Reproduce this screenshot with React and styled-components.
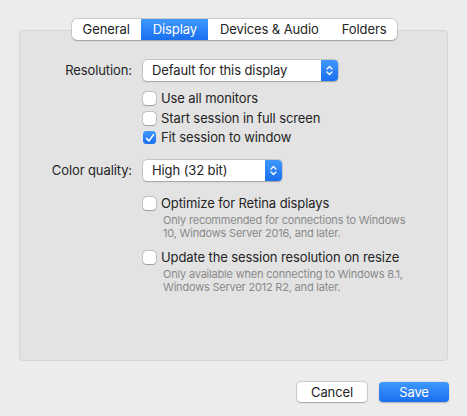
import React from 'react';
import styled, { createGlobalStyle } from 'styled-components';

const GlobalStyle = createGlobalStyle`
  html, body {
    margin: 0;
    padding: 0;
    background: #ececec;
  }
  body {
    font-family: Inter, "Noto Sans", "Liberation Sans", sans-serif;
    font-size: 13px;
    letter-spacing: -0.1px;
    color: #242424;
    -webkit-font-smoothing: antialiased;
  }
`;

const tabs = ['General', 'Display', 'Devices & Audio', 'Folders'];

function Chevrons() {
  return (
    <svg width="7" height="11" viewBox="0 0 7 11" fill="none">
      <path d="M1 4 L3.5 1.5 L6 4" stroke="#fff" strokeWidth="1.3" strokeLinecap="round" strokeLinejoin="round" />
      <path d="M1 7 L3.5 9.5 L6 7" stroke="#fff" strokeWidth="1.3" strokeLinecap="round" strokeLinejoin="round" />
    </svg>
  );
}

function Check() {
  return (
    <svg width="10" height="10" viewBox="0 0 10 10" fill="none">
      <path d="M1.6 5.4 L4 7.9 L8.6 1.6" stroke="#fff" strokeWidth="1.6" strokeLinecap="round" strokeLinejoin="round" />
    </svg>
  );
}

function Popup({ value, width }) {
  return (
    <St.Popup $width={width}>
      <span className="value">{value}</span>
      <span className="arrows">
        <Chevrons />
      </span>
    </St.Popup>
  );
}

function Checkbox({ label, checked, note }) {
  return (
    <St.CheckRow>
      <St.Box $checked={checked}>{checked && <Check />}</St.Box>
      <St.CheckText>
        <span>{label}</span>
        {note && <St.Note>{note}</St.Note>}
      </St.CheckText>
    </St.CheckRow>
  );
}

export default function App() {
  return (
    <St.Window>
      <GlobalStyle />
      <St.TabBar>
        {tabs.map((t) => (
          <St.Tab key={t} $active={t === 'Display'}>
            {t}
          </St.Tab>
        ))}
      </St.TabBar>
      <St.Group>
        <St.Form>
          <St.Label>Resolution:</St.Label>
          <Popup value="Default for this display" width={195} />
          <span />
          <St.Options>
            <Checkbox label="Use all monitors" />
            <Checkbox label="Start session in full screen" />
            <Checkbox label="Fit session to window" checked />
          </St.Options>

          <St.Label className="second">Color quality:</St.Label>
          <St.Cell className="second">
            <Popup value="High (32 bit)" width={139} />
          </St.Cell>
          <span />
          <St.Options className="loose">
            <Checkbox
              label="Optimize for Retina displays"
              note={<>Only recommended for connections to Windows<br />10, Windows Server 2016, and later.</>}
            />
            <Checkbox
              label="Update the session resolution on resize"
              note={<>Only available when connecting to Windows 8.1,<br />Windows Server 2012 R2, and later.</>}
            />
          </St.Options>
        </St.Form>
      </St.Group>
      <St.Footer>
        <St.Button>Cancel</St.Button>
        <St.Button $primary>Save</St.Button>
      </St.Footer>
    </St.Window>
  );
}

const St = {
  Window: styled.div`
    width: 467px;
    height: 416px;
    box-sizing: border-box;
    padding: 19px 19px 0 19px;
    display: flex;
    flex-direction: column;
  `,
  TabBar: styled.div`
    align-self: center;
    display: flex;
    height: 21px;
    margin-left: 2px;
    background: #fff;
    border-radius: 5px;
    box-shadow: 0 0 0 0.5px rgba(0, 0, 0, 0.22), 0 0.5px 1.5px rgba(0, 0, 0, 0.2);
    overflow: hidden;
    position: relative;
    z-index: 1;
  `,
  Tab: styled.div`
    display: flex;
    align-items: center;
    justify-content: center;
    padding: 0 11px;
    line-height: 21px;
    color: ${(p) => (p.$active ? '#fff' : '#242424')};
    background: ${(p) => (p.$active ? 'linear-gradient(#3f98fd, #1a6ff0)' : 'transparent')};
    & + & {
      border-left: 1px solid ${(p) => (p.$active ? 'transparent' : '#e2e2e2')};
    }
  `,
  Group: styled.div`
    margin-top: -10px;
    height: 331px;
    box-sizing: border-box;
    background: #e3e3e3;
    border: 1px solid #d6d6d6;
    border-radius: 4px;
    padding-top: 29px;
  `,
  Form: styled.div`
    display: grid;
    grid-template-columns: 112px auto;
    column-gap: 11px;
    align-items: start;

    .second {
      margin-top: 15px;
    }
  `,
  Label: styled.div`
    text-align: right;
    line-height: 21px;
  `,
  Cell: styled.div``,
  Popup: styled.div`
    width: ${(p) => p.$width}px;
    height: 21px;
    display: flex;
    background: #fff;
    border-radius: 4px;
    box-shadow: 0 0 0 0.5px rgba(0, 0, 0, 0.2), 0 0.5px 1.5px rgba(0, 0, 0, 0.22);
    overflow: hidden;

    .value {
      flex: 1;
      padding-left: 9px;
      line-height: 21px;
    }
    .arrows {
      width: 17px;
      display: flex;
      align-items: center;
      justify-content: center;
      background: linear-gradient(#3f98fd, #1a6ff0);
    }
  `,
  Options: styled.div`
    margin-top: 10px;
    display: flex;
    flex-direction: column;
    gap: 4.5px;

    &.loose {
      margin-top: 15px;
      gap: 10px;
    }
  `,
  CheckRow: styled.div`
    display: flex;
    align-items: flex-start;
    gap: 5px;
  `,
  Box: styled.div`
    width: 13px;
    height: 13px;
    margin-top: 1px;
    box-sizing: border-box;
    border-radius: 3.5px;
    flex-shrink: 0;
    display: flex;
    align-items: center;
    justify-content: center;
    background: ${(p) => (p.$checked ? 'linear-gradient(#3f98fd, #1a6ff0)' : '#fff')};
    box-shadow: ${(p) =>
      p.$checked ? 'none' : '0 0 0 0.5px rgba(0,0,0,0.25), 0 0.5px 1px rgba(0,0,0,0.2)'};
  `,
  CheckText: styled.div`
    display: flex;
    flex-direction: column;
    line-height: 15px;
  `,
  Note: styled.div`
    margin-top: 3px;
    padding-left: 2px;
    font-size: 11px;
    letter-spacing: -0.2px;
    line-height: 13px;
    color: #8a8a8a;
  `,
  Footer: styled.div`
    display: flex;
    justify-content: flex-end;
    gap: 12px;
    margin-top: 21px;
    margin-right: -1px;
  `,
  Button: styled.div`
    width: 70px;
    height: 20px;
    line-height: 20px;
    text-align: center;
    border-radius: 4px;
    color: ${(p) => (p.$primary ? '#fff' : '#242424')};
    background: ${(p) => (p.$primary ? 'linear-gradient(#3f98fd, #1a6ff0)' : '#fff')};
    box-shadow: ${(p) =>
      p.$primary
        ? '0 0.5px 1.5px rgba(0,0,0,0.25)'
        : '0 0 0 0.5px rgba(0,0,0,0.2), 0 0.5px 1.5px rgba(0,0,0,0.22)'};
  `,
};
